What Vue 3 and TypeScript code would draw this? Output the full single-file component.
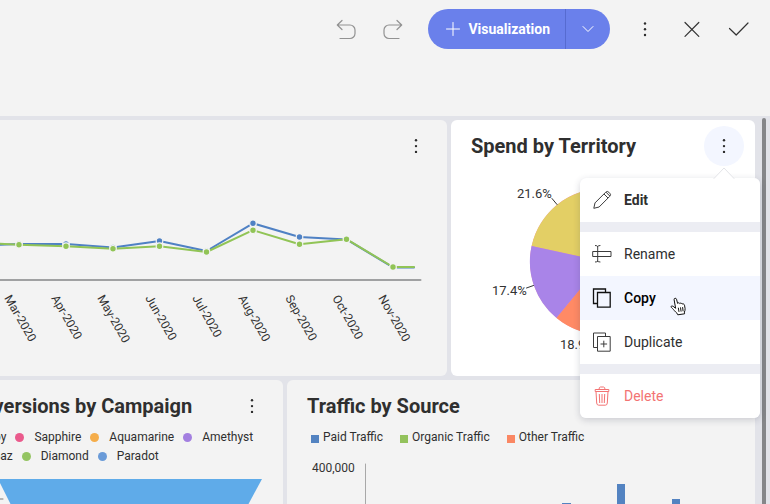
<script setup lang="ts">
interface Series {
  name: string
  color: string
  points: [number, number][]
}

interface LegendEntry {
  label: string
  color: string
}

const months: { label: string; x: number; y: number }[] = [
  { label: 'Mar-2020', x: 4, y: 178 },
  { label: 'Apr-2020', x: 51, y: 178 },
  { label: 'May-2020', x: 97, y: 178 },
  { label: 'Jun-2020', x: 145, y: 178 },
  { label: 'Jul-2020', x: 192, y: 178 },
  { label: 'Aug-2020', x: 238, y: 178 },
  { label: 'Sep-2020', x: 285, y: 178 },
  { label: 'Oct-2020', x: 332, y: 178 },
  { label: 'Nov-2020', x: 378, y: 178 },
]

const series: Series[] = [
  {
    name: 'blue',
    color: '#4f81c4',
    points: [[-27, 126], [19, 124], [66, 124], [113, 127.5], [159.5, 121], [206.5, 131], [253, 103.3], [299.5, 117], [346.5, 119.4], [393, 147.4], [414, 147.4]],
  },
  {
    name: 'green',
    color: '#91c456',
    points: [[-27, 122.5], [19, 124.8], [66, 126.2], [113, 128.8], [159.5, 126.2], [206.5, 132], [253, 110.2], [299.5, 124.2], [346.5, 119.2], [393, 147], [414, 147]],
  },
]

const gems: LegendEntry[][] = [
  [
    { label: 'Ruby', color: '#5fabe9' },
    { label: 'Sapphire', color: '#ea5a8c' },
    { label: 'Aquamarine', color: '#f5ad4a' },
    { label: 'Amethyst', color: '#a37fe0' },
  ],
  [
    { label: 'Topaz', color: '#e3cf65' },
    { label: 'Diamond', color: '#94c462' },
    { label: 'Paradot', color: '#6a9bd8' },
  ],
]

const sources: LegendEntry[] = [
  { label: 'Paid Traffic', color: '#5383c1' },
  { label: 'Organic Traffic', color: '#93c25c' },
  { label: 'Other Traffic', color: '#fa8763' },
]

function line(points: [number, number][]): string {
  return points.map((p) => p.join(',')).join(' ')
}
</script>

<template>
  <div class="app">
    <header class="toolbar">
      <button class="tool muted" aria-label="Undo">
        <svg viewBox="0 0 24 24"><path d="M8 3.5 3.3 8 8 12.5M3.5 8H16a5 5 0 0 1 5 5v3.5a5 5 0 0 1-5 5H6" /></svg>
      </button>
      <button class="tool muted" aria-label="Redo">
        <svg viewBox="0 0 24 24"><path d="M16 3.5 20.7 8 16 12.5M20.5 8H8a5 5 0 0 0-5 5v3.5a5 5 0 0 0 5 5h10" /></svg>
      </button>
      <div class="split">
        <button class="split-main">
          <svg viewBox="0 0 14 14"><path d="M7 .5v13M.5 7h13" /></svg>
          <span>Visualization</span>
        </button>
        <button class="split-more" aria-label="More visualization options">
          <svg viewBox="0 0 14 14"><path d="m2 4.5 5 5 5-5" /></svg>
        </button>
      </div>
      <button class="tool" aria-label="More options">
        <svg viewBox="0 0 24 24" class="dots"><circle cx="12" cy="6.5" r="1.2" /><circle cx="12" cy="12.3" r="1.2" /><circle cx="12" cy="18" r="1.2" /></svg>
      </button>
      <button class="tool" aria-label="Close">
        <svg viewBox="0 0 24 24"><path d="m5 5.5 13.8 13.8M18.8 5.5 5 19.3" /></svg>
      </button>
      <button class="tool" aria-label="Apply">
        <svg viewBox="0 0 24 24"><path d="m2.5 11.5 6.7 6.5L21 6" /></svg>
      </button>
    </header>

    <main class="board">
      <section class="row top-row">
        <article class="card">
          <header class="card-head end">
            <button class="kebab" aria-label="Chart options">
              <svg viewBox="0 0 24 24" class="dots"><circle cx="12" cy="6.3" r="1.2" /><circle cx="12" cy="12.1" r="1.2" /><circle cx="12" cy="17.9" r="1.2" /></svg>
            </button>
          </header>
          <svg class="trend" viewBox="-62 52 509 204" role="img" aria-label="Monthly trend">
            <path d="M-40 160H420.5" class="axis" />
            <g v-for="s in series" :key="s.name">
              <polyline :points="line(s.points)" :stroke="s.color" class="trend-line" />
              <circle v-for="p in s.points.slice(1, -1)" :key="p[0]" :cx="p[0]" :cy="p[1]" r="3.3" :fill="s.color" class="trend-dot" />
            </g>
            <text v-for="m in months" :key="m.label" :transform="`translate(${m.x} ${m.y}) rotate(60)`" class="label">{{ m.label }}</text>
          </svg>
        </article>

        <article class="card active">
          <header class="card-head">
            <h2>Spend by Territory</h2>
            <div class="menu-anchor">
              <button class="kebab open" aria-label="Spend by Territory options" aria-expanded="true">
                <svg viewBox="0 0 24 24" class="dots"><circle cx="12" cy="6.3" r="1.2" /><circle cx="12" cy="12.1" r="1.2" /><circle cx="12" cy="17.9" r="1.2" /></svg>
              </button>
              <div class="menu">
                <svg class="caret" viewBox="0 0 22 12"><path d="M1 11.5 11 1l10 10.5" /></svg>
                <div class="group first">
                  <button class="item strong">
                    <svg viewBox="0 0 20 20"><path d="m1.8 18.3 1.2-5.4L13.6 2.3a2.3 2.3 0 0 1 3.3 0l.8.8a2.3 2.3 0 0 1 0 3.3L7.1 17l-5.3 1.3ZM12 4l4 4M14 2.2l3.8 3.8" /></svg>
                    <span>Edit</span>
                  </button>
                </div>
                <div class="group">
                  <button class="item">
                    <svg viewBox="0 0 20 20"><path d="M.7 7.5H19v5H.7zM5.7 2v16M3 1.5q2.2 0 2.7 1 .5-1 2.7-1M3 18q2.2 0 2.7-1 .5 1 2.7 1" /></svg>
                    <span>Rename</span>
                  </button>
                  <button class="item hovered">
                    <svg viewBox="0 0 20 20"><path d="M5.5 15.5h-4V1h12v3M5.5 4.5h12.7v14.7H5.5z" /></svg>
                    <span>Copy</span>
                    <svg class="pointer" viewBox="0 0 18 20"><path d="M5.7 12.6 4.1 3.7c-.3-1.6 2-2.1 2.4-.5l1.1 4.2c.5-.9 1.9-.8 2.2.2.6-.8 1.800-.6 2.200.4 1.300-.5 2.200.1 2.500 1.200l.6 3.500c.2 1.300-.4 2.400-.7 3.400l.2 1.700-6.800 1-.9-1.700C5 15.700 3.600 13.500 2.500 12.500c-1-.9-1.900-1.600-1.300-2.200.8-.8 2.200-.1 3.900 1.700M8.300 11.700l.7 4.200M10.500 11.400l.6 4.200M12.600 11.100l.5 4.200" /></svg>
                  </button>
                  <button class="item">
                    <svg viewBox="0 0 20 20"><path d="M5.5 15.5h-4V1h12v3M5.5 4.5h12.7v14.7H5.5zM11.8 8.7v6.6M8.5 12h6.6" /></svg>
                    <span>Duplicate</span>
                  </button>
                </div>
                <div class="group last">
                  <button class="item danger">
                    <svg viewBox="0 0 20 20"><path d="M3.2 5.5h13.6v-2H3.2zM7 3.5q0-2.5 1.5-2.5h3q1.5 0 1.5 2.5M4 5.5 4.7 17q.1 2.2 2 2.2h6.6q1.9 0 2-2.2L16 5.5M7.3 8l.4 9M10 8v9M12.7 8l-.4 9" /></svg>
                    <span>Delete</span>
                  </button>
                </div>
              </div>
            </div>
          </header>
          <svg class="pie" viewBox="451 172 304 204" role="img" aria-label="Spend share by territory">
            <circle cx="603" cy="261.5" r="73" fill="#f28ab0" />
            <path d="M603 261.5 531.6 246A73 73 0 0 1 603 188.5Z" fill="#e3cf65" />
            <path d="M603 261.5 556.5 318A73 73 0 0 1 531.6 246Z" fill="#a984e8" />
            <path d="M603 261.5V334.5A73 73 0 0 1 556.5 318Z" fill="#ff8a65" />
            <path d="m552 198.5 5 6M526.5 288l7-2.5" class="leader" />
            <text x="517" y="198" class="share">21.6%</text>
            <text x="492" y="295" class="share">17.4%</text>
            <text x="560" y="349" class="share">18.9%</text>
          </svg>
        </article>
      </section>

      <section class="row bottom-row">
        <article class="card">
          <header class="card-head">
            <h2>Conversions by Campaign</h2>
            <button class="kebab" aria-label="Conversions by Campaign options">
              <svg viewBox="0 0 24 24" class="dots"><circle cx="12" cy="6.3" r="1.2" /><circle cx="12" cy="12.1" r="1.2" /><circle cx="12" cy="17.9" r="1.2" /></svg>
            </button>
          </header>
          <div class="gem-legend">
            <ul v-for="(gemRow, i) in gems" :key="i">
              <li v-for="g in gemRow" :key="g.label">
                <svg viewBox="0 0 9 9"><circle cx="4.5" cy="4.5" r="4.5" :fill="g.color" /></svg>{{ g.label }}
              </li>
            </ul>
          </div>
          <svg class="funnel" viewBox="-62 469 345 60" role="img" aria-label="Conversion funnel">
            <path d="M-2 479H262L235 529H23Z" fill="#5fabe9" />
            <path d="M-12 499H3" class="tick" />
          </svg>
        </article>

        <article class="card">
          <header class="card-head">
            <h2>Traffic by Source</h2>
          </header>
          <ul class="source-legend">
            <li v-for="s in sources" :key="s.label">
              <svg viewBox="0 0 8 8"><path d="M0 0h8v8H0z" :fill="s.color" /></svg>{{ s.label }}
            </li>
          </ul>
          <svg class="bars" viewBox="287 449 468 80" role="img" aria-label="Traffic volume by source">
            <text x="312" y="472" class="label">400,000</text>
            <path d="M365.5 464V529" class="bar-axis" />
            <path d="M562 503h9v26h-9zM617 484h8v45h-8zM672 499h8v30h-8z" fill="#5383c1" />
          </svg>
        </article>
      </section>
      <div class="scrollbar" />
    </main>
  </div>
</template>

<style>
body {
  margin: 0;
  background: #f3f3f3;
}
</style>

<style scoped>
.app {
  display: flex;
  flex-direction: column;
  height: 100vh;
  overflow: hidden;
  background: #f3f3f3;
  color: #2f2f2f;
  font-family: Roboto, "Liberation Sans", sans-serif;
  font-size: 12px;
}
button {
  padding: 0;
  border: 0;
  background: none;
  color: inherit;
  font: inherit;
  cursor: pointer;
}
svg {
  display: block;
  flex: none;
  fill: none;
  stroke-linecap: round;
  stroke-linejoin: round;
}
ul {
  margin: 0;
  padding: 0;
  list-style: none;
}
h2 {
  margin: 0;
  font-size: 20px;
  line-height: 24px;
  font-weight: 700;
  white-space: nowrap;
}
.toolbar {
  display: flex;
  flex: none;
  align-items: center;
  justify-content: flex-end;
  gap: 23px;
  padding: 9px 19px 67px;
}
.tool svg {
  width: 24px;
  height: 24px;
  stroke: #333;
  stroke-width: 1.2;
}
.tool.muted svg {
  stroke: #929292;
}
.dots circle {
  fill: #2b2b2b;
  stroke: none;
}
.split {
  display: flex;
  height: 40px;
  overflow: hidden;
  border-radius: 20px;
  background: #6a80eb;
  color: #fff;
}
.split svg {
  width: 14px;
  height: 14px;
  stroke: #fff;
  stroke-width: 1;
}
.split-main {
  display: flex;
  align-items: center;
  gap: 8px;
  padding: 0 15px 0 18px;
  font-size: 14px;
  font-weight: 700;
}
.split-more {
  width: 45px;
  padding-left: 15px;
  border-left: 1px solid #566bd0;
}
/* The board is panned to the right, so its left edge lies outside the window. */
.board {
  position: relative;
  display: flex;
  flex: 1;
  flex-direction: column;
  gap: 4px;
  min-height: 0;
  margin-left: -62px;
  padding: 4px 15px 0 0;
  background: #e2e3e9;
}
.row {
  display: grid;
  flex: none;
  gap: 4px;
}
.top-row {
  grid-template-columns: 509fr 304fr;
}
.bottom-row {
  grid-template-columns: 345fr 468fr;
}
.card {
  display: flex;
  flex-direction: column;
  min-width: 0;
  border-radius: 6px;
  background: #f3f3f3;
}
.card.active {
  background: #fff;
}
.card-head {
  display: flex;
  align-items: center;
  justify-content: space-between;
  height: 52px;
  padding: 0 11px 0 20px;
}
.card-head.end {
  justify-content: flex-end;
}
.bottom-row .card-head {
  height: 44px;
  padding-top: 4px;
}
.kebab {
  display: flex;
  align-items: center;
  justify-content: center;
  width: 40px;
  height: 40px;
  border-radius: 50%;
}
.kebab svg {
  width: 24px;
  height: 24px;
}
.kebab.open {
  background: #f3f6ff;
}
.trend,
.pie,
.funnel,
.bars {
  width: 100%;
}
.axis {
  stroke: #a0a1a2;
  stroke-width: 2;
}
.trend-line {
  stroke-width: 2;
}
.trend-dot {
  stroke: #f3f3f3;
  stroke-width: 1.2;
}
.label {
  fill: #333;
  font-size: 12px;
}
.share {
  fill: #333;
  font-size: 13px;
}
.leader {
  stroke: #333;
}
.tick {
  stroke: #777;
}
.bar-axis {
  stroke: #a8a8a8;
}
.menu-anchor {
  position: relative;
}
.menu {
  position: absolute;
  z-index: 2;
  top: 52px;
  right: -16px;
  display: flex;
  flex-direction: column;
  gap: 10px;
  width: 180px;
  border-radius: 6px;
  background: #ecedf3;
  box-shadow: 0 2px 7px rgba(40, 44, 70, 0.2);
}
.caret {
  position: absolute;
  top: -11px;
  right: 25px;
  width: 22px;
  height: 12px;
  fill: #fff;
  stroke: #e3e4e8;
}
.group {
  background: #fff;
}
.first {
  border-radius: 6px 6px 0 0;
}
.last {
  border-radius: 0 0 6px 6px;
}
.item {
  position: relative;
  display: flex;
  align-items: center;
  gap: 12px;
  width: 100%;
  height: 44px;
  padding-left: 12px;
  font-size: 14px;
}
.item svg {
  width: 20px;
  height: 20px;
  stroke: #3c3c3c;
  stroke-linecap: butt;
  stroke-linejoin: miter;
}
.strong {
  font-weight: 700;
}
.item.hovered {
  background: #f3f6ff;
  color: #000;
  font-weight: 500;
}
.hovered svg {
  stroke: #111;
  stroke-width: 1.3;
}
.item .pointer {
  position: absolute;
  top: 20px;
  left: 90px;
  width: 18px;
  height: 20px;
  fill: #fff;
  stroke-width: 1;
  stroke-linejoin: round;
}
.item.danger {
  color: #f37373;
}
.danger svg {
  stroke: #f37373;
}
.gem-legend {
  padding: 0 0 3px 23px;
}
.gem-legend ul {
  display: flex;
  gap: 9px;
}
.gem-legend li {
  display: flex;
  align-items: center;
  gap: 10px;
  line-height: 19px;
}
.gem-legend svg {
  width: 9px;
  height: 9px;
}
.source-legend {
  display: flex;
  gap: 17px;
  padding: 0 0 3px 24px;
  line-height: 18px;
}
.source-legend li {
  display: flex;
  align-items: center;
  gap: 4px;
}
.source-legend svg {
  width: 8px;
  height: 8px;
  margin-top: 3px;
}
.scrollbar {
  position: absolute;
  top: 2px;
  right: 4px;
  bottom: 0;
  width: 4px;
  border-radius: 2px 2px 0 0;
  background: #858689;
}
</style>
